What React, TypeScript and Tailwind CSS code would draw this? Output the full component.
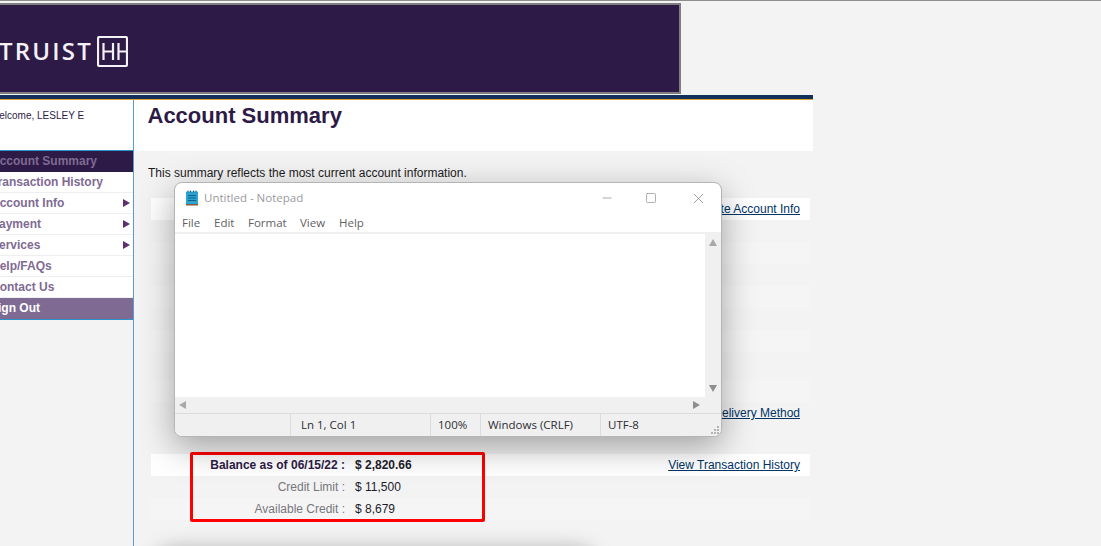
import { Minus, Square, X } from "lucide-react";

const navItems = [
  { label: "Account Summary", offset: "-ml-[9px]", active: true },
  { label: "Transaction History", offset: "-ml-[9px]" },
  { label: "Account Info", offset: "-ml-[9px]", arrow: true },
  { label: "Payment", offset: "-ml-[9px]", arrow: true },
  { label: "Services", offset: "-ml-[9px]", arrow: true },
  { label: "Help/FAQs", offset: "-ml-[9px]" },
  { label: "Contact Us", offset: "-ml-[9px]" },
  { label: "Sign Out", offset: "-ml-[10px]", signOut: true },
];

function TruistLogo() {
  return (
    <svg width="31" height="31" viewBox="0 0 31 31" fill="none" stroke="#f4f2f6" strokeWidth="2.2">
      <rect x="1" y="1" width="29" height="29" rx="1.5" />
      <path d="M6.5 7v17M6.5 15.5H16M16 7v17M21.5 7v17M21.5 15.5H30" />
    </svg>
  );
}

function NotepadIcon() {
  return (
    <svg width="14" height="16" viewBox="0 0 14 16">
      <rect x="1" y="1.5" width="12" height="13.5" rx="1" fill="#2aa3d1" />
      <rect x="1" y="14" width="12" height="1.5" fill="#8a5a3a" />
      <path d="M3 5.5h8M3 8h8M3 10.5h8" stroke="#0d5f86" strokeWidth="1" />
      <path d="M3 0.5v2M5.5 0.5v2M8.5 0.5v2M11 0.5v2" stroke="#17648c" strokeWidth="1" />
    </svg>
  );
}

function Notepad() {
  return (
    <div className="absolute left-[174px] top-[182px] flex h-[255px] w-[548px] flex-col overflow-hidden rounded-lg border border-[#b5b5b5] bg-white font-['Open_Sans',sans-serif] shadow-[0_10px_34px_rgba(0,0,0,0.34)]">
      <div className="flex h-[30px] items-center pl-[10px]">
        <NotepadIcon />
        <span className="ml-[5px] text-[11.5px] text-[#999aa0]">Untitled - Notepad</span>
        <div className="ml-auto flex items-center text-[#7c7c7c]">
          <Minus size={14} strokeWidth={1.1} className="mr-[31px]" />
          <Square size={12} strokeWidth={1.2} className="mr-[33px]" />
          <X size={17} strokeWidth={1} className="mr-[14px]" />
        </div>
      </div>
      <div className="flex h-[19px] items-center pl-[7px] text-[11.5px] text-[#5f5f64]">
        <span className="w-[32px]">File</span>
        <span className="w-[34px]">Edit</span>
        <span className="w-[52px]">Format</span>
        <span className="w-[39px]">View</span>
        <span>Help</span>
      </div>
      <div className="flex flex-1 border-t-[2px] border-[#f0f0f0]">
        <div className="flex-1 bg-white" />
        <div className="flex w-[16px] flex-col items-center justify-between bg-[#f0f0f0] py-[5px]">
          <span className="h-0 w-0 border-x-[4.5px] border-b-[7px] border-x-transparent border-b-[#a8a8a8]" />
          <span className="h-0 w-0 border-x-[4.5px] border-t-[7px] border-x-transparent border-t-[#8e8e8e]" />
        </div>
      </div>
      <div className="flex h-[16px] items-center justify-between bg-[#f0f0f0] pl-[4px] pr-[21px]">
        <span className="h-0 w-0 border-y-[4.5px] border-r-[7px] border-y-transparent border-r-[#a8a8a8]" />
        <span className="h-0 w-0 border-y-[4.5px] border-l-[7px] border-y-transparent border-l-[#8e8e8e]" />
      </div>
      <div className="relative flex h-[23px] items-center border-t border-[#dcdcdc] bg-[#f0f0f0] text-[11.5px] text-[#2d2d33]">
        <div className="h-full w-[116px] border-r border-[#dcdcdc]" />
        <div className="flex h-full w-[140px] items-center border-r border-[#dcdcdc] pl-[10px]">Ln 1, Col 1</div>
        <div className="flex h-full w-[50px] items-center border-r border-[#dcdcdc] pl-[7px]">100%</div>
        <div className="flex h-full w-[120px] items-center border-r border-[#dcdcdc] pl-[7px]">Windows (CRLF)</div>
        <div className="pl-[7px]">UTF-8</div>
        <svg className="absolute bottom-[1px] right-[1px]" width="10" height="10" viewBox="0 0 10 10" fill="#b4b4b4">
          <rect x="7" y="1" width="2" height="2" />
          <rect x="4" y="4" width="2" height="2" />
          <rect x="7" y="4" width="2" height="2" />
          <rect x="1" y="7" width="2" height="2" />
          <rect x="4" y="7" width="2" height="2" />
          <rect x="7" y="7" width="2" height="2" />
        </svg>
      </div>
    </div>
  );
}

function Row({ className = "", children }: { className?: string; children?: React.ReactNode }) {
  return (
    <div className={`flex h-[22px] items-center justify-end pr-[10px] text-[12px] text-[#003366] ${className}`}>
      {children}
    </div>
  );
}

export default function App() {
  return (
    <div className="relative h-[546px] w-[1101px] overflow-hidden bg-[#f3f3f3] font-['Liberation_Sans',sans-serif]">
      <div className="h-px w-full bg-[#8e8e8e]" />
      <div className="mt-[2px] flex h-[91px] w-[681px] items-center border-2 border-l-0 border-[#7f7f7f] bg-[#2e1a47] pt-[5px]">
        <span className="-ml-[1px] font-['Open_Sans',sans-serif] text-[24px] font-semibold leading-none tracking-[2.2px] text-[#f4f2f6]">
          TRUIST
        </span>
        <span className="ml-[4px] flex">
          <TruistLogo />
        </span>
      </div>

      <div className="mt-[1px] w-[813px]">
        <div className="h-[5px] border-b border-[#e0a030] bg-[#12315a]" />
        <div className="flex h-[447px]">
          <aside className="w-[134px] shrink-0 border-r border-[#5b9bd0]">
            <div className="h-[50px] overflow-hidden bg-white pt-[10px] text-[10px] leading-[12px] text-[#2e1a47]">
              <span className="-ml-[10px] inline-block">Welcome, LESLEY E</span>
            </div>
            <nav className="overflow-hidden border-y border-[#2b93c9] text-[12px] font-bold">
              {navItems.map((item) => (
                <div
                  key={item.label}
                  className={`flex h-[21px] items-center justify-between border-b pr-[3px] ${
                    item.active
                      ? "border-[#2e1a47] bg-[#2e1a47] text-[#7f6a93]"
                      : item.signOut
                        ? "border-[#7f6a93] bg-[#7f6a93] text-white"
                        : "border-[#eeeeee] bg-white text-[#7f6a93]"
                  }`}
                >
                  <span className={`${item.offset} whitespace-nowrap`}>{item.label}</span>
                  {item.arrow && (
                    <span className="h-0 w-0 border-y-[4.5px] border-l-[7px] border-y-transparent border-l-[#5f2f70]" />
                  )}
                </div>
              ))}
            </nav>
          </aside>

          <main className="flex-1">
            <div className="h-[51px] bg-white pl-[13.5px] pt-[2px]">
              <h1 className="text-[22px] font-bold leading-[28px] text-[#2e1a47]">Account Summary</h1>
            </div>
            <div className="pl-[14px] pt-[15px] text-[12px] leading-[14px] text-[#1c1c1c]">
              This summary reflects the most current account information.
            </div>
            <div className="ml-[17px] mr-[3px] mt-[18px]">
              <Row className="bg-white">
                <a className="underline">Update Account Info</a>
              </Row>
              <Row className="mt-[22px] bg-[#f5f5f5]" />
              <Row className="mt-[22px] bg-[#f5f5f5]" />
              <Row className="mt-[22px] bg-[#f5f5f5]" />
              <Row className="mt-[28px] bg-[#f5f5f5]" />
              <Row>
                <a className="underline">Change Delivery Method</a>
              </Row>
              <Row className="mt-[30px] bg-white">
                <a className="underline">View Transaction History</a>
              </Row>
              <Row className="mt-[22px] bg-[#f5f5f5]" />
            </div>
          </main>
        </div>
      </div>

      <div className="absolute left-[190px] top-[452px] flex h-[70px] w-[295px] flex-col justify-center rounded-[2px] border-[3px] border-[#ff0000] text-[12px] leading-[22px]">
        <div className="flex">
          <span className="w-[152px] text-right font-bold text-[#2e1a47]">Balance as of 06/15/22 :</span>
          <span className="ml-[10px] font-bold text-[#1c1c2c]">$ 2,820.66</span>
        </div>
        <div className="flex">
          <span className="w-[152px] text-right text-[#77777d]">Credit Limit :</span>
          <span className="ml-[10px] text-[#1c1c2c]">$ 11,500</span>
        </div>
        <div className="flex">
          <span className="w-[152px] text-right text-[#77777d]">Available Credit :</span>
          <span className="ml-[10px] text-[#1c1c2c]">$ 8,679</span>
        </div>
      </div>

      {/* shadow of a second window below the fold */}
      <div className="absolute left-[160px] top-[552px] h-[40px] w-[430px] rounded-lg bg-[#999999] shadow-[0_0_22px_rgba(0,0,0,0.4)]" />

      <Notepad />
    </div>
  );
}
